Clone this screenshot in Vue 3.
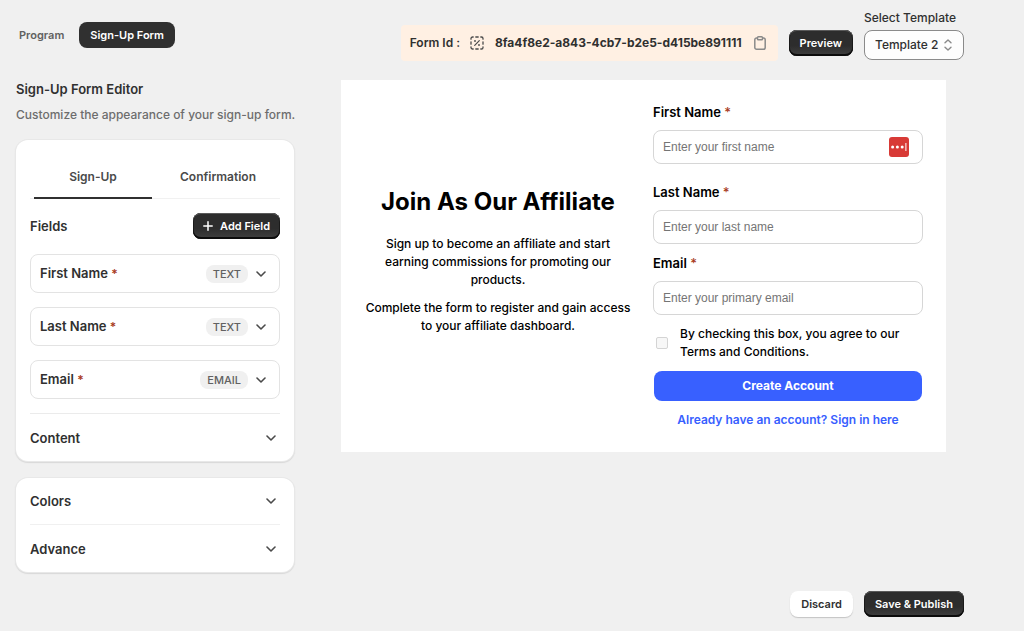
<script setup>
import { ref } from 'vue'

const formId = '8fa4f8e2-a843-4cb7-b2e5-d415be891111'
const template = ref('Template 2')
const agreed = ref(false)

const editorFields = [
  { name: 'First Name', type: 'TEXT' },
  { name: 'Last Name', type: 'TEXT' },
  { name: 'Email', type: 'EMAIL' }
]

const formFields = [
  { id: 'first-name', label: 'First Name', placeholder: 'Enter your first name', type: 'text', manager: true, spaced: true },
  { id: 'last-name', label: 'Last Name', placeholder: 'Enter your last name', type: 'text' },
  { id: 'email', label: 'Email', placeholder: 'Enter your primary email', type: 'email' }
]
</script>

<template>
  <div class="page">
    <header class="topbar">
      <nav class="views">
        <button type="button" class="view">Program</button>
        <button type="button" class="view active">Sign-Up Form</button>
      </nav>
      <div class="tools">
        <div class="form-id">
          <span>Form Id :</span>
          <svg class="id-icon" width="14" height="14" viewBox="0 0 14 14" fill="none" stroke="#4a4a4a" stroke-width="1.3" stroke-linecap="round">
            <path d="M1 3.2V2.6A1.6 1.6 0 0 1 2.6 1H3.2M5.8 1H8.2M10.8 1H11.4A1.6 1.6 0 0 1 13 2.6V3.2M13 5.8V8.2M13 10.8V11.4A1.6 1.6 0 0 1 11.4 13H10.8M8.2 13H5.8M3.2 13H2.6A1.6 1.6 0 0 1 1 11.4V10.8M1 8.2V5.8" />
            <path d="M4.7 9.4 9.3 4.7" stroke-width="1.2" />
            <circle cx="5" cy="5" r="0.9" fill="#4a4a4a" stroke="none" />
            <circle cx="9" cy="9" r="0.9" fill="#4a4a4a" stroke="none" />
          </svg>
          <span class="id-value">{{ formId }}</span>
          <button type="button" class="copy" aria-label="Copy form id">
            <svg width="12" height="14" viewBox="0 0 12 14" fill="none" stroke="#8a8a8a" stroke-width="1.5" stroke-linejoin="round">
              <path d="M3.5 2H2.6A1.8 1.8 0 0 0 .8 3.8V11.4A1.8 1.8 0 0 0 2.6 13.2H9.4A1.8 1.8 0 0 0 11.2 11.4V3.8A1.8 1.8 0 0 0 9.4 2H8.5" />
              <path d="M4.4 .8H7.6A.9.9 0 0 1 8.5 1.7V2.9A.9.9 0 0 1 7.6 3.8H4.4A.9.9 0 0 1 3.5 2.9V1.7A.9.9 0 0 1 4.4 .8Z" />
            </svg>
          </button>
        </div>
        <button type="button" class="btn dark preview-btn">Preview</button>
        <div class="template">
          <label for="template">Select Template</label>
          <div class="select">
            <select id="template" v-model="template">
              <option>Template 1</option>
              <option>Template 2</option>
            </select>
            <svg class="sort" width="8" height="12" viewBox="0 0 8 12" fill="none" stroke="#8a8a8a" stroke-width="1.4" stroke-linecap="round" stroke-linejoin="round">
              <path d="M1 3.8 4 1 7 3.8M1 8.2 4 11 7 8.2" />
            </svg>
          </div>
        </div>
      </div>
    </header>

    <main class="body">
      <aside class="sidebar">
        <h1>Sign-Up Form Editor</h1>
        <p class="hint">Customize the appearance of your sign-up form.</p>

        <section class="card">
          <div class="tabs">
            <button type="button" class="tab selected">Sign-Up</button>
            <button type="button" class="tab">Confirmation</button>
          </div>
          <div class="fields-head">
            <h2>Fields</h2>
            <button type="button" class="btn dark add">
              <svg width="10" height="10" viewBox="0 0 10 10" fill="none" stroke="#fff" stroke-width="1.5" stroke-linecap="round">
                <path d="M5 .8V9.2M.8 5H9.2" />
              </svg>
              Add Field
            </button>
          </div>
          <ul class="fields">
            <li v-for="f in editorFields" :key="f.name">
              <button type="button" class="field">
                <span class="field-name">{{ f.name }} <span class="star">*</span></span>
                <span class="badge">{{ f.type }}</span>
                <svg class="chevron" width="10" height="6" viewBox="0 0 10 6"><path d="M1 1 5 5 9 1" /></svg>
              </button>
            </li>
          </ul>
          <button type="button" class="section content">
            Content
            <svg class="chevron" width="10" height="6" viewBox="0 0 10 6"><path d="M1 1 5 5 9 1" /></svg>
          </button>
        </section>

        <section class="card">
          <button type="button" class="section colors">
            Colors
            <svg class="chevron" width="10" height="6" viewBox="0 0 10 6"><path d="M1 1 5 5 9 1" /></svg>
          </button>
          <button type="button" class="section">
            Advance
            <svg class="chevron" width="10" height="6" viewBox="0 0 10 6"><path d="M1 1 5 5 9 1" /></svg>
          </button>
        </section>
      </aside>

      <section class="canvas">
        <div class="intro">
          <h2>Join As Our Affiliate</h2>
          <p>Sign up to become an affiliate and start earning commissions for promoting our products.</p>
          <p>Complete the form to register and gain access to your affiliate dashboard.</p>
        </div>
        <form class="signup" @submit.prevent>
          <div v-for="f in formFields" :key="f.id" class="row" :class="{ spaced: f.spaced }">
            <label :for="f.id">{{ f.label }} <span class="star">*</span></label>
            <div class="box">
              <input :id="f.id" :type="f.type" :placeholder="f.placeholder" />
              <svg v-if="f.manager" class="manager" width="20" height="20" viewBox="0 0 20 20">
                <rect width="20" height="20" rx="3" fill="#d83a36" />
                <circle cx="3.6" cy="10" r="1.5" fill="#fff" />
                <circle cx="8.4" cy="10" r="1.5" fill="#fff" />
                <circle cx="13.2" cy="10" r="1.5" fill="#fff" />
                <rect x="16.4" y="6" width="1" height="8" fill="#fff" />
              </svg>
            </div>
          </div>
          <div class="terms">
            <input id="terms" v-model="agreed" type="checkbox" />
            <label for="terms">By checking this box, you agree to our Terms and Conditions.</label>
          </div>
          <button type="submit" class="create">Create Account</button>
          <a href="#" class="signin">Already have an account? Sign in here</a>
        </form>
      </section>
    </main>

    <footer class="actions">
      <button type="button" class="btn light">Discard</button>
      <button type="button" class="btn dark">Save &amp; Publish</button>
    </footer>
  </div>
</template>

<style>
body {
  background: #f0f0f0;
}
</style>

<style scoped>
.page {
  box-sizing: border-box;
  min-height: 100vh;
  padding: 8px 60px 14px 16px;
  display: flex;
  flex-direction: column;
  font-family: Inter, "Liberation Sans", sans-serif;
  font-size: 12px;
  line-height: 20px;
  font-weight: 500;
  color: #303030;
  background: #f0f0f0;
}
button,
select,
input {
  font: inherit;
  color: inherit;
}
button {
  border: 0;
  padding: 0;
  background: none;
  cursor: pointer;
}
h1,
h2,
p,
ul {
  margin: 0;
  padding: 0;
}
h1,
h2 {
  font-size: 13px;
  line-height: 20px;
  font-weight: 600;
}
.topbar {
  display: flex;
  justify-content: space-between;
  align-items: flex-start;
  height: 72px;
}
.views {
  display: flex;
  gap: 12px;
  padding-top: 14px;
}
.view {
  height: 26px;
  padding: 0 3px;
  font-size: 11px;
  color: #616161;
  font-weight: 600;
}
.view.active {
  padding: 0 11px;
  border-radius: 8px;
  background: #303030;
  color: #fff;
}
.tools {
  display: flex;
  align-items: flex-start;
  gap: 11px;
}
.form-id {
  display: flex;
  align-items: center;
  height: 36px;
  margin-top: 17px;
  padding: 0 12px 0 9px;
  border-radius: 4px;
  background: #fff0e3;
  font-weight: 600;
}
.id-value {
  font-weight: 700;
}
.id-icon {
  margin: 0 11px 0 10px;
}
.copy {
  display: flex;
  margin-left: 12px;
}
.btn {
  display: flex;
  align-items: center;
  justify-content: center;
  gap: 7px;
  height: 26px;
  padding: 0 11px;
  border-radius: 8px;
  font-size: 11px;
  font-weight: 600;
}
.add {
  padding: 0 10px;
}
.dark {
  color: #fff;
  background: linear-gradient(#2d2d2d 60%, #404040);
  box-shadow: inset 0 -2px 0 #0c0c0c, inset 0 1px 0 #5a5a5a, inset 1px 0 0 #1a1a1a, inset -1px 0 0 #1a1a1a;
}
.light {
  background: #fff;
  box-shadow: 0 1px 1px #c4c4c4;
}
.preview-btn {
  margin-top: 22px;
}
.template label {
  display: block;
  margin-bottom: 2px;
}
.select {
  position: relative;
}
.select select {
  display: block;
  box-sizing: border-box;
  width: 100px;
  height: 30px;
  padding: 0 10px;
  appearance: none;
  border: 1px solid #8a8a8a;
  border-radius: 8px;
  background: #fdfdfd;
}
.sort {
  position: absolute;
  right: 12px;
  top: 9px;
  pointer-events: none;
}
.body {
  display: grid;
  grid-template-columns: 278px minmax(0, 1fr);
  gap: 47px;
  align-items: start;
}
.sidebar h1 {
  line-height: 18px;
}
.hint {
  margin: 7px 0 15px;
  color: #6d6d6d;
  white-space: nowrap;
}
.card {
  padding: 0 14px;
  border-radius: 12px;
  background: #fff;
  box-shadow: 0 0 0 1px #e8e8e8, 0 1px 1px 1px #d8d8d8;
}
.card + .card {
  margin-top: 17px;
}
.tabs {
  display: grid;
  grid-template-columns: 118px 1fr;
  padding: 16px 0 0 4px;
  border-bottom: 1px solid #f1f1f1;
}
.tab {
  height: 43px;
  margin-bottom: -1px;
  border-bottom: 2px solid transparent;
  color: #4a4a4a;
  font-weight: 600;
}
.tab.selected {
  border-color: #303030;
}
.tab:last-child {
  padding-left: 4px;
}
.fields-head {
  display: flex;
  align-items: center;
  justify-content: space-between;
  margin-top: 14px;
}
.fields {
  display: grid;
  gap: 14px;
  padding: 15px 0 14px;
  list-style: none;
}
.field {
  display: flex;
  align-items: center;
  box-sizing: border-box;
  width: 100%;
  height: 39px;
  padding: 0 13px 0 9px;
  border: 1px solid #e3e3e3;
  border-radius: 8px;
  text-align: left;
}
.field-name {
  flex: 1;
  font-size: 13px;
  font-weight: 600;
}
.star {
  color: #a83a1c;
}
.field .star {
  font-size: 12px;
}
.badge {
  margin-right: 8px;
  padding: 0 7px;
  border-radius: 8px;
  background: #f0f0f0;
  color: #616161;
  font-size: 11px;
  line-height: 18px;
}
.chevron {
  flex: none;
  fill: none;
  stroke: #4a4a4a;
  stroke-width: 1.6;
  stroke-linecap: round;
  stroke-linejoin: round;
}
.section {
  display: flex;
  align-items: center;
  justify-content: space-between;
  width: 100%;
  height: 47px;
  padding: 0 4px 0 0;
  font-size: 13px;
  font-weight: 600;
}
.content {
  height: 48px;
  border-top: 1px solid #ebebeb;
}
.colors {
  border-bottom: 1px solid #f0f0f0;
}
.canvas {
  display: grid;
  grid-template-columns: 1fr 1fr;
  gap: 20px;
  align-items: center;
  margin-right: 18px;
  padding: 22px 23px 22px 22px;
  background: #fff;
  color: #000;
}
.intro {
  padding-bottom: 10px;
  text-align: center;
  line-height: 18px;
}
.intro h2 {
  margin-bottom: 18px;
  font-size: 24px;
  line-height: 30px;
  font-weight: 700;
}
.intro p + p {
  margin-top: 10px;
}
.row label {
  display: block;
  margin-bottom: 8px;
  font-size: 13px;
  font-weight: 600;
}
.row .star {
  font-weight: 500;
}
.box {
  position: relative;
  margin-bottom: 9px;
}
.spaced .box {
  margin-bottom: 18px;
}
.box input {
  display: block;
  box-sizing: border-box;
  width: 100%;
  height: 34px;
  padding: 0 9px;
  border: 1px solid #d6d6d6;
  border-radius: 8px;
  background: #fff;
  font-family: "Liberation Sans", Arial, sans-serif;
  font-weight: 400;
}
.box input::placeholder {
  color: #757575;
}
.manager {
  position: absolute;
  right: 14px;
  top: 7px;
}
.terms {
  display: flex;
  align-items: center;
  gap: 12px;
  margin: 1px 0 10px;
  line-height: 18px;
}
.terms input {
  flex: none;
  width: 12px;
  height: 12px;
  margin: 0 0 0 3px;
  appearance: none;
  box-sizing: border-box;
  border: 1px solid #d4d4d4;
  border-radius: 2px;
  background: #f7f7f7;
}
.signup {
  display: flex;
  flex-direction: column;
}
.create {
  height: 30px;
  margin: 0 1px;
  border-radius: 8px;
  background: #3860ff;
  color: #fff;
  font-weight: 700;
}
.signin {
  display: block;
  margin-top: 9px;
  text-align: center;
  color: #3860ff;
  font-weight: 600;
  text-decoration: none;
}
.actions {
  display: flex;
  justify-content: flex-end;
  gap: 11px;
  margin-top: auto;
}
</style>
